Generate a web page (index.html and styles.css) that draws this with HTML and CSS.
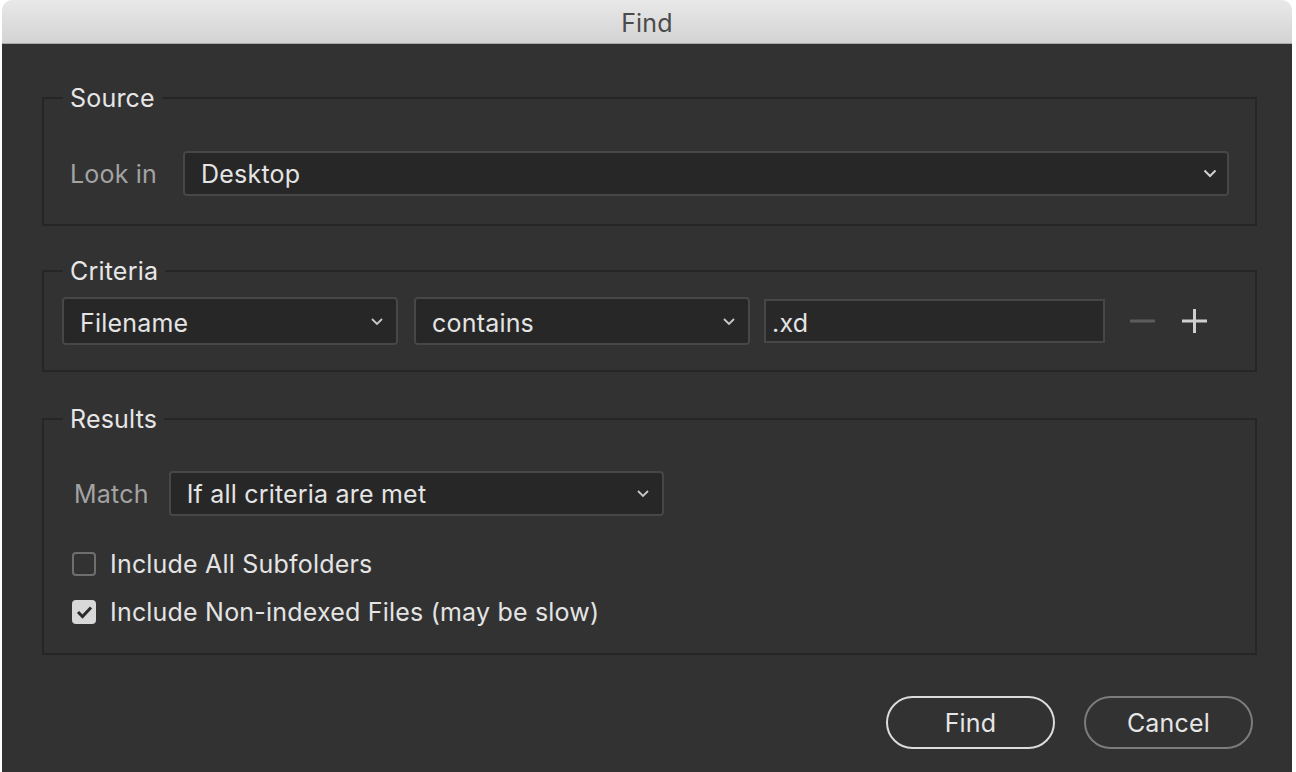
FILE: index.html
```html
<!DOCTYPE html>
<html lang="en">
<head>
  <meta charset="UTF-8" />
  <title>Find</title>
  <link rel="stylesheet" href="styles.css">
</head>
<body>

<div class="window">
  <div class="titlebar">Find</div>

  <div class="dialog">
    <fieldset class="group">
      <legend>Source</legend>
      <div class="inner source">
        <div class="row">
          <span class="label">Look in</span>
          <div class="select wide">
            <span>Desktop</span>
            <svg class="chev" width="14" height="9" viewBox="0 0 14 9"><path d="M1.5 1.5 L7 7 L12.5 1.5" fill="none" stroke="#d0d0d0" stroke-width="2"/></svg>
          </div>
        </div>
      </div>
    </fieldset>

    <fieldset class="group">
      <legend>Criteria</legend>
      <div class="inner criteria">
        <div class="row">
          <div class="select crit">
            <span>Filename</span>
            <svg class="chev" width="14" height="9" viewBox="0 0 14 9"><path d="M2 2 L7 7 L12 2" fill="none" stroke="#c8c8c8" stroke-width="1.8"/></svg>
          </div>
          <div class="select crit op">
            <span>contains</span>
            <svg class="chev" width="14" height="9" viewBox="0 0 14 9"><path d="M2 2 L7 7 L12 2" fill="none" stroke="#c8c8c8" stroke-width="1.8"/></svg>
          </div>
          <div class="textbox">.xd</div>
          <div class="pm">
            <svg width="25" height="26" viewBox="0 0 25 26"><path d="M0 13 H25" stroke="#5c5c5c" stroke-width="3"/></svg>
            <svg width="25" height="26" viewBox="0 0 25 26"><path d="M0 13 H25 M12.5 1 V25" stroke="#cfcfcf" stroke-width="3"/></svg>
          </div>
        </div>
      </div>
    </fieldset>

    <fieldset class="group results-group">
      <legend>Results</legend>
      <div class="inner results">
        <div class="row">
          <span class="label">Match</span>
          <div class="select match">
            <span>If all criteria are met</span>
            <svg class="chev" width="14" height="9" viewBox="0 0 14 9"><path d="M2 2 L7 7 L12 2" fill="none" stroke="#c8c8c8" stroke-width="1.8"/></svg>
          </div>
        </div>
        <div class="checks">
          <div class="check"><span class="box"></span>Include All Subfolders</div>
          <div class="check"><span class="box on"><svg width="17" height="14" viewBox="0 0 17 14"><path d="M2 7 L6.5 11.5 L15 2.5" fill="none" stroke="#2b2b2b" stroke-width="3"/></svg></span>Include Non-indexed Files (may be slow)</div>
        </div>
      </div>
    </fieldset>

    <div class="buttons">
      <button class="btn primary">Find</button>
      <button class="btn">Cancel</button>
    </div>
  </div>
</div>

</body>
</html>
```

FILE: styles.css
```css
body { margin: 0; background: #ffffff; font-family: 'Inter', 'Liberation Sans', sans-serif; letter-spacing: 0.2px; }
.window { margin: 0 4px 0 2px; height: 772px; display: flex; flex-direction: column; }
.titlebar {
  height: 43px; line-height: 46px; text-align: center;
  background: linear-gradient(#e9e9e9, #d3d3d3);
  border-bottom: 1px solid #a9a9a9;
  border-radius: 10px 10px 0 0;
  color: #4b4b4b; font-size: 25px;
}
.dialog { flex: 1; background: #323232; padding-top: 40px; }

.group {
  margin: 0 35px 0 40px;
  border: 2px solid #262626;
  padding: 0;
  min-width: 0;
}
.group legend {
  margin-left: 19px; padding: 0 7px;
  font-size: 25px; line-height: 28px; color: #e6e6e6;
}
.group + .group { margin-top: 31px; }
.group.results-group { margin-top: 33px; }
.row { display: flex; align-items: center; }
.label { color: #a3a3a3; font-size: 25px; }

.source { padding: 39px 26px 28px 26px; }
.source .row { gap: 26px; }

.select {
  box-sizing: border-box; flex-shrink: 0;
  display: flex; align-items: center; justify-content: space-between;
  background: #272727;
  border: 2px solid #474747; border-radius: 4px;
  padding: 0 12px 0 16px;
  color: #e4e4e4; font-size: 25px;
}
.select.wide { flex: 1; height: 45px; }
.select.wide .chev { margin-right: -2px; }

.criteria { padding: 12px 20px 25px 18px; }
.select.crit { width: 336px; height: 48px; margin-right: 16px; }
.select.crit span { padding-top: 3px; }
.select.crit.op { margin-right: 14px; }
.textbox {
  box-sizing: border-box; flex-shrink: 0; width: 341px; height: 44px;
  background: #282828; border: 2px solid #474747;
  padding: 2px 6px 0; line-height: 40px;
  color: #e4e4e4; font-size: 25px;
}
.pm { display: flex; gap: 27px; margin-left: 25px; flex-shrink: 0; }

.results { padding: 38px 26px 28px 30px; }
.results .row { gap: 20px; }
.select.match { width: 495px; height: 45px; }
.checks { margin-top: 35px; margin-left: -2px; display: flex; flex-direction: column; gap: 22px; }
.check { display: flex; align-items: center; gap: 14px; color: #e4e4e4; font-size: 25px; line-height: 26px; }
.box {
  box-sizing: border-box; width: 24px; height: 24px;
  border: 2px solid #6e6e6e; border-radius: 4px;
  display: flex; align-items: center; justify-content: center;
}
.box.on { background: #d8d8d8; border-color: #d8d8d8; }

.buttons { display: flex; justify-content: flex-end; gap: 29px; margin: 41px 39px 0 0; }
.btn {
  box-sizing: border-box; width: 169px; height: 53px;
  border: 2px solid #7c7c7c; border-radius: 27px;
  background: transparent; color: #e6e6e6;
  font-family: 'Inter', 'Liberation Sans', sans-serif; font-size: 25px; letter-spacing: 0.2px;
}
.btn.primary { border-color: #dcdcdc; }
```
